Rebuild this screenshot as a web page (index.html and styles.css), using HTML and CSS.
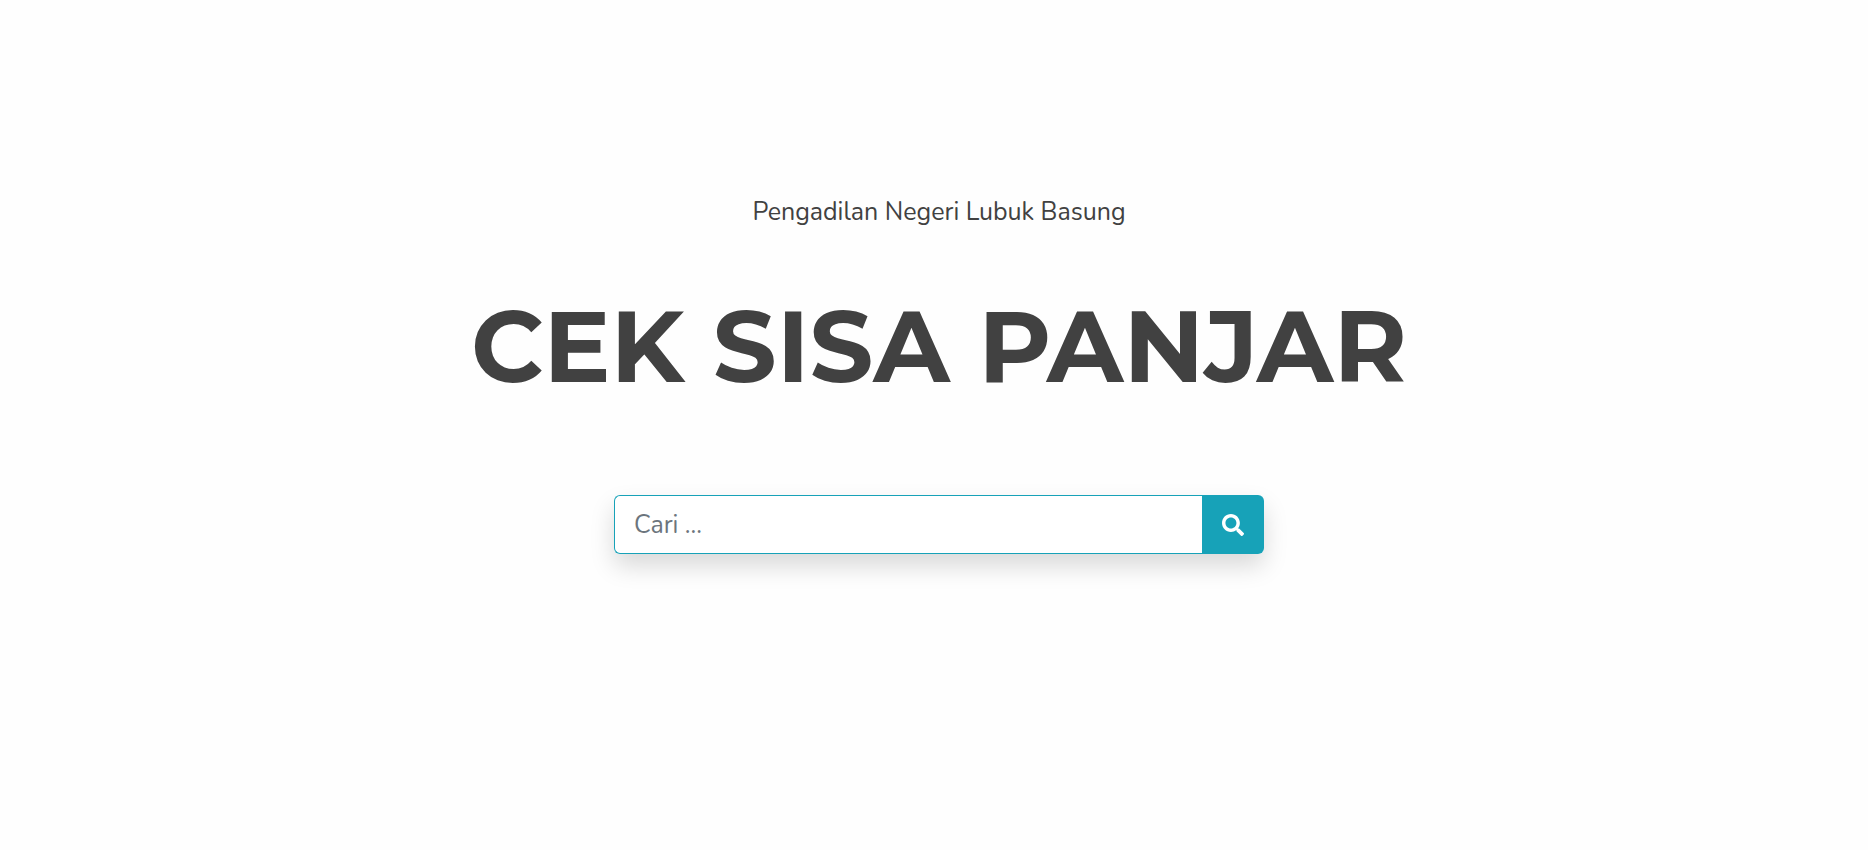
FILE: index.html
```html
<!DOCTYPE html>
<html lang="id">
<head>
    <meta charset="UTF-8">
    <meta name="viewport" content="width=device-width, initial-scale=1.0">
    <title>Cek Sisa Panjar</title>
    <link rel="stylesheet" href="styles.css">
</head>
<body>
    <main class="container">
        <p class="subtitle">Pengadilan Negeri Lubuk Basung</p>
        <h1 class="title">CEK SISA PANJAR</h1>

        <form class="search-form" role="search">
            <input type="text" class="search-input" name="cari" placeholder="Cari ..." aria-label="Cari">
            <button type="submit" class="search-button" aria-label="Cari">
                <svg class="search-icon" viewBox="0 0 512 512" aria-hidden="true">
                    <path fill="currentColor" d="M505 442.7L405.3 343c-4.500-4.500-10.600-7-17-7H372c27.600-35.300 44-79.700 44-128C416 93.100 322.900 0 208 0S0 93.100 0 208s93.100 208 208 208c48.300 0 92.700-16.400 128-44v16.300c0 6.400 2.500 12.500 7 17l99.700 99.700c9.400 9.400 24.600 9.400 33.900 0l28.300-28.300c9.400-9.400 9.400-24.600.1-34zM208 336c-70.700 0-128-57.200-128-128 0-70.700 57.200-128 128-128 70.700 0 128 57.200 128 128 0 70.700-57.200 128-128 128z"/>
                </svg>
            </button>
        </form>
    </main>
</body>
</html>
```

FILE: styles.css
```css
:root {
    --info: #17a2b8;
    --text-dark: #414141;
    --text-muted: #6c757d;
    --bg-page: #fefefe;
}
* {
    box-sizing: border-box;
}
body {
    margin: 0;
    font-family: Nunito, Lato, sans-serif;
    background: var(--bg-page);
    color: var(--text-dark);
}
.container {
    display: flex;
    flex-direction: column;
    align-items: center;
    padding: 192px 0 40px 10px;
}
.subtitle {
    margin: 0;
    font-size: 25px;
    line-height: 40px;
}
.title {
    margin: 54px 0 89px;
    font-family: Montserrat, Inter, sans-serif;
    font-size: 100px;
    font-weight: 700;
    line-height: 120px;
    text-align: center;
}
.search-form {
    display: flex;
    width: 100%;
    max-width: 650px;
    border-radius: 6px;
    box-shadow: 0 12px 25px rgba(0, 0, 0, 0.15);
}
.search-input {
    flex: 1;
    min-width: 0;
    height: 59px;
    padding: 0 19px;
    border: 1px solid var(--info);
    border-right: none;
    border-radius: 6px 0 0 6px;
    background: #fff;
    color: var(--text-dark);
    font-family: inherit;
    font-size: 25px;
}
.search-input::placeholder {
    color: var(--text-muted);
    opacity: 1;
}
.search-input:focus {
    outline: none;
}
.search-button {
    display: flex;
    align-items: center;
    justify-content: center;
    width: 62px;
    padding: 0;
    border: none;
    border-radius: 0 6px 6px 0;
    background: var(--info);
    color: #fff;
    cursor: pointer;
}
.search-button:hover {
    background: #138496;
}
.search-icon {
    width: 22px;
    height: 22px;
}
```
